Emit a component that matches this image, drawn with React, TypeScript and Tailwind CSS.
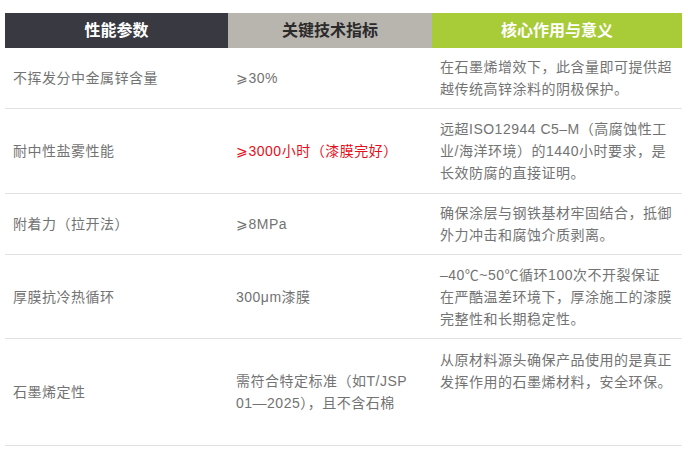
const rows = [
  {
    name: '不挥发分中金属锌含量',
    value: ['⩾30%'],
    red: false,
    meaning: ['在石墨烯增效下，此含量即可提供超', '越传统高锌涂料的阴极保护。'],
    h: 'h-[61px]',
  },
  {
    name: '耐中性盐雾性能',
    value: ['⩾3000小时（漆膜完好）'],
    red: true,
    meaning: ['远超ISO12944 C5–M（高腐蚀性工', '业/海洋环境）的1440小时要求，是', '长效防腐的直接证明。'],
    h: 'h-[85px]',
  },
  {
    name: '附着力（拉开法）',
    value: ['⩾8MPa'],
    red: false,
    meaning: ['确保涂层与钢铁基材牢固结合，抵御', '外力冲击和腐蚀介质剥离。'],
    h: 'h-[61px]',
  },
  {
    name: '厚膜抗冷热循环',
    value: ['300μm漆膜'],
    red: false,
    meaning: ['–40℃~50℃循环100次不开裂保证', '在严酷温差环境下，厚涂施工的漆膜', '完整性和长期稳定性。'],
    h: 'h-[84px]',
  },
  {
    name: '石墨烯定性',
    value: ['需符合特定标准（如T/JSP', '01—2025），且不含石棉'],
    red: false,
    meaning: ['从原材料源头确保产品使用的是真正', '发挥作用的石墨烯材料，安全环保。'],
    h: 'h-[107px]',
    top: true,
  },
];

export default function App() {
  return (
    <div className="w-[688px] h-[458px] bg-white pt-[13px] pl-[5px] font-['Liberation_Sans','Noto_Sans_CJK_SC',sans-serif]">
      <div className="w-[677px]">
        {/* header */}
        <div className="flex h-[35px] text-[16px] font-bold">
          <div className="w-[223px] bg-[#393942] text-white flex items-center justify-center">性能参数</div>
          <div className="w-[204px] bg-[#b8b4ae] text-[#2b2b2b] flex items-center justify-center">关键技术指标</div>
          <div className="w-[250px] bg-[#a8cb38] text-white flex items-center justify-center">核心作用与意义</div>
        </div>

        {/* body */}
        {rows.map((r) => (
          <div key={r.name} className={`flex border-b border-[#e2e2e2] text-[14px] leading-[22px] tracking-[0.5px] text-[#737373] ${r.h}`}>
            <div className="w-[223px] pl-[8px] flex items-center">{r.name}</div>
            <div className={`w-[204px] pl-[8px] flex flex-col justify-center ${r.red ? 'text-[#e50f1c]' : ''}`}>
              {r.value.map((l) => (
                <div key={l}>{l}</div>
              ))}
            </div>
            <div className={`w-[250px] pl-[8px] flex flex-col ${r.top ? 'justify-start pt-[10px]' : 'justify-center'}`}>
              {r.meaning.map((l) => (
                <div key={l} className="whitespace-nowrap">{l}</div>
              ))}
            </div>
          </div>
        ))}
      </div>
    </div>
  );
}
